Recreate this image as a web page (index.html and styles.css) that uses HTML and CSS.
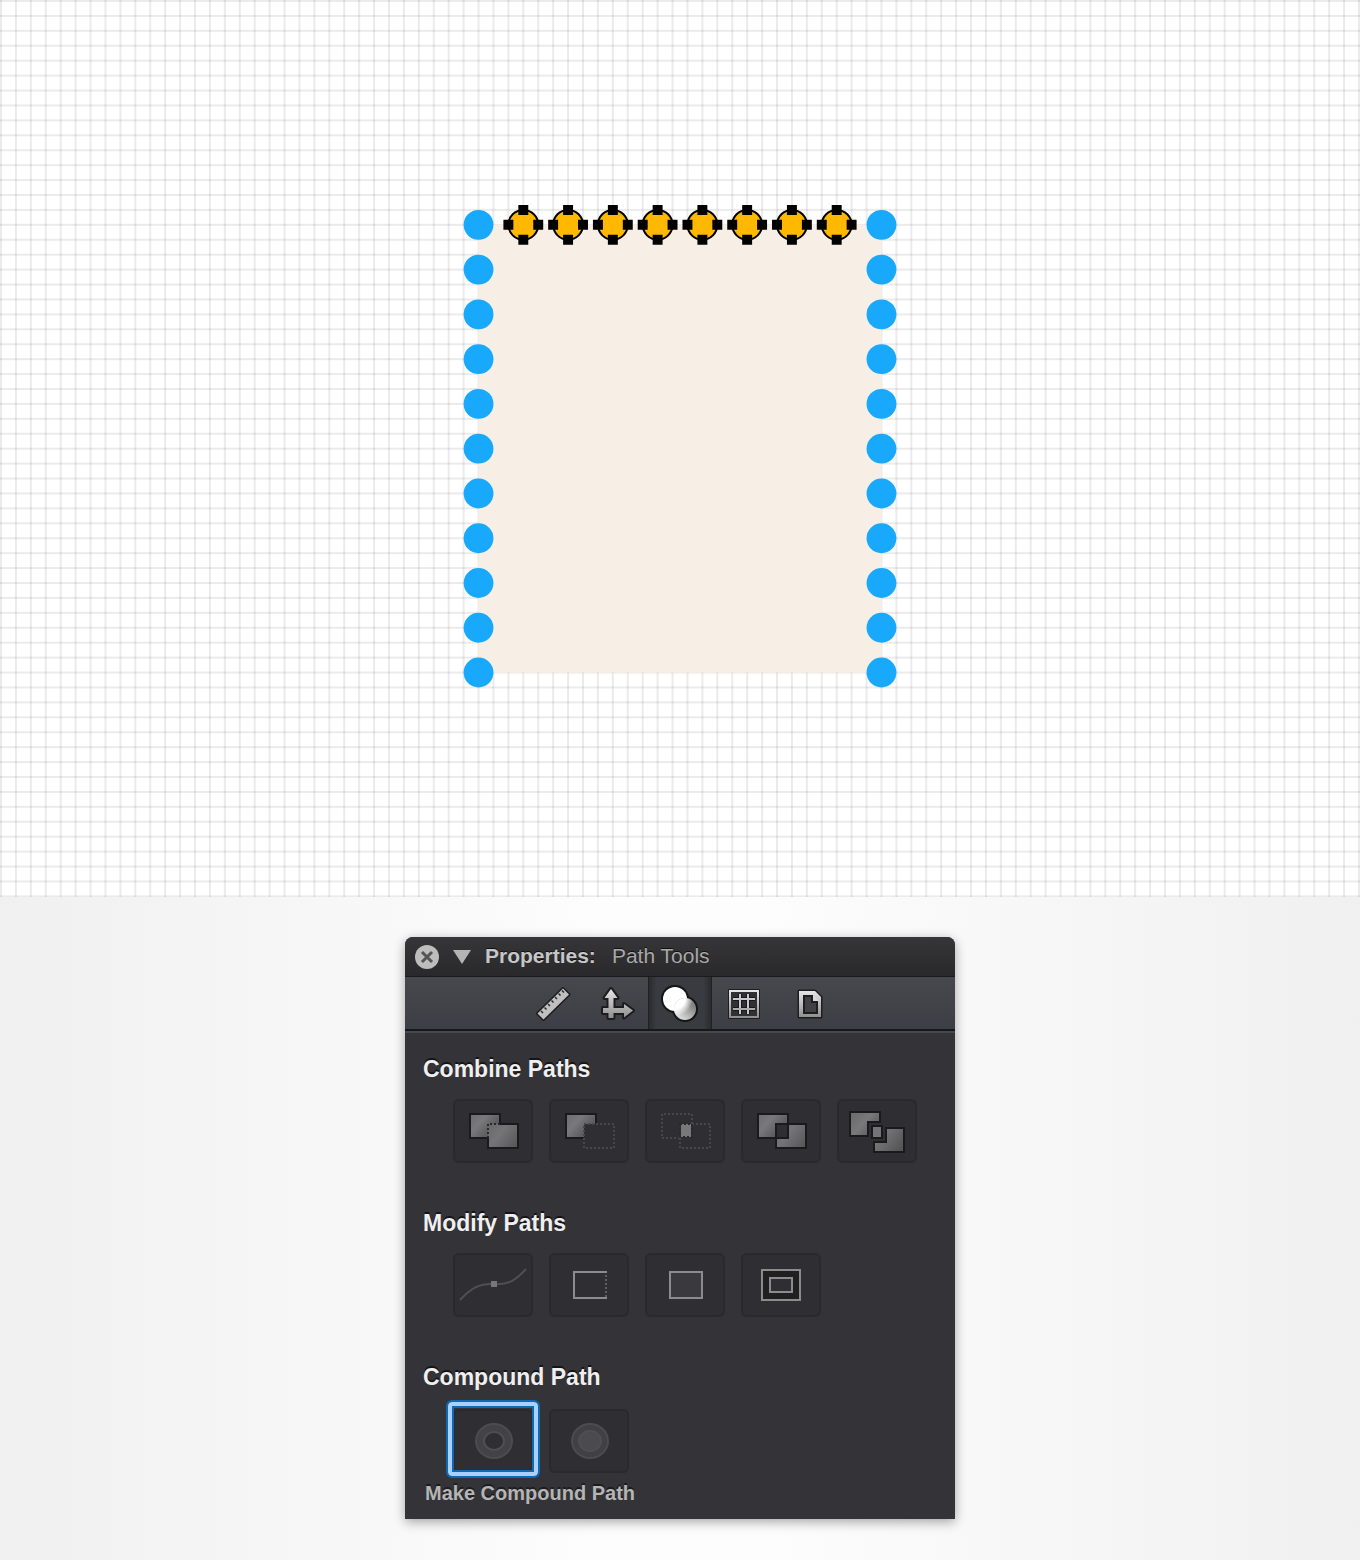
FILE: index.html
```html
<!DOCTYPE html>
<html lang="en">
<head>
<meta charset="utf-8">
<meta name="viewport" content="width=device-width, initial-scale=1">
<title>Path Tools</title>
<link rel="stylesheet" href="styles.css">
</head>
<body>
<main class="page">
  <svg class="artboard" viewBox="-1 -1 1367 902" role="img" aria-label="Drawing canvas">
    <defs>
      <pattern id="cell" width="15" height="15" x="-1" y="-1" patternUnits="userSpaceOnUse">
        <path class="grid-line" d="M1 0V15"/><path class="grid-line" d="M0 1H15"/>
      </pattern>
      <circle id="dot" class="dot" r="15"/>
      <g id="node">
        <circle class="node-fill" r="15"/>
        <path class="node-handle" d="M-5-20H5V-10H-5ZM-5 10H5V20H-5ZM-20-5H-10V5H-20ZM10-5H20V5H10Z"/>
      </g>
      <g id="dots">
        <use href="#dot" y="225"/><use href="#dot" y="270"/><use href="#dot" y="315"/><use href="#dot" y="360"/>
        <use href="#dot" y="405"/><use href="#dot" y="450"/><use href="#dot" y="495"/><use href="#dot" y="540"/>
        <use href="#dot" y="585"/><use href="#dot" y="630"/><use href="#dot" y="675"/>
      </g>
    </defs>
    <rect x="-1" y="-1" width="1367" height="902" fill="#fff"/>
    <rect x="-1" y="-1" width="1367" height="902" fill="url(#cell)"/>
    <rect class="sheet" x="480" y="225" width="405" height="450"/>
    <use href="#dots" x="480"/><use href="#dots" x="885"/>
    <use href="#node" x="525" y="225"/><use href="#node" x="570" y="225"/><use href="#node" x="615" y="225"/><use href="#node" x="660" y="225"/>
    <use href="#node" x="705" y="225"/><use href="#node" x="750" y="225"/><use href="#node" x="795" y="225"/><use href="#node" x="840" y="225"/>
  </svg>

  <div class="desk">
    <section class="panel" aria-labelledby="panel-title">
      <header class="titlebar">
        <button class="close" type="button" aria-label="Close">
          <svg width="24" height="24" viewBox="0 0 24 24"><circle cx="12" cy="12" r="12" fill="#bdbdbd"/><path d="M7 7l10 10M17 7l-10 10" stroke="#555557" stroke-width="3"/></svg>
        </button>
        <button class="collapse" type="button" aria-label="Collapse">
          <svg width="18" height="14" viewBox="0 0 18 14"><path d="M0 0H18L9 14Z" fill="#b4b4b5"/></svg>
        </button>
        <h1 class="title" id="panel-title">Properties: <span class="subtitle">Path Tools</span></h1>
      </header>

      <nav class="tabs" aria-label="Inspectors">
        <button class="tab" type="button" aria-label="Geometry">
          <svg width="64" height="52" viewBox="0 0 64 52">
            <defs><linearGradient id="metal" x1="0" y1="0" x2="0" y2="1"><stop offset="0" stop-color="#e6e6e6"/><stop offset="1" stop-color="#8f8f90"/></linearGradient></defs>
            <path d="M17.500 36.500L43 11.500L49 17.500L23.500 42.500Z" fill="#c0c0c1" stroke="#1c1c1f" stroke-width="3" stroke-linejoin="round" paint-order="stroke"/>
            <path d="M21 34l2 2M24.500 30.500l2 2M28 27l2 2M31.500 23.500l2 2M35 20l2 2M38.500 16.500l2 2M42 13.500l2 2" stroke="#2a2a2d" stroke-width="1.500"/>
          </svg>
        </button>
        <button class="tab" type="button" aria-label="Transform">
          <svg width="64" height="52" viewBox="0 0 64 52">
            <path d="M27 12L33.500 21H29.500V31H40V27L49 33.500L40 40.500V36H29.500V41H24.500V36H19V31H24.500V21H20.500Z" fill="url(#metal)" stroke="#1c1c1f" stroke-width="4" stroke-linejoin="round" paint-order="stroke"/>
          </svg>
        </button>
        <button class="tab tab-active" type="button" aria-label="Path Tools" aria-current="page">
          <svg width="64" height="52" viewBox="0 0 64 52">
            <defs>
              <linearGradient id="pearl" gradientUnits="userSpaceOnUse" x1="30" y1="38" x2="41" y2="24"><stop offset="0" stop-color="#d6d6d6"/><stop offset=".9" stop-color="#858585"/></linearGradient>
              <radialGradient id="glow" gradientUnits="userSpaceOnUse" cx="26" cy="21" r="19"><stop offset=".6" stop-color="#fff"/><stop offset="1" stop-color="#fff" stop-opacity="0"/></radialGradient>
            </defs>
            <g fill="#151517"><circle cx="27" cy="22" r="14"/><circle cx="37" cy="32" r="13"/></g>
            <circle cx="27" cy="22" r="12" fill="#fff"/><circle cx="37" cy="32" r="11" fill="url(#pearl)"/>
            <circle cx="37" cy="32" r="11" fill="url(#glow)"/>
          </svg>
        </button>
        <button class="tab" type="button" aria-label="Grid">
          <svg width="64" height="52" viewBox="0 0 64 52">
            <rect x="16" y="12" width="32" height="30" rx="1" fill="#1e1e21"/>
            <rect x="18" y="14" width="28" height="26" fill="#303035" stroke="url(#metal)" stroke-width="2"/>
            <path d="M28 17V37M36 17V37M21 22H43M21 32H43" stroke="#18181b" stroke-width="4"/>
            <path d="M28 17V37M36 17V37M21 22H43" stroke="#cacacb" stroke-width="2"/>
            <path d="M21 32H43" stroke="#ababad" stroke-width="2"/>
          </svg>
        </button>
        <button class="tab" type="button" aria-label="Document">
          <svg width="64" height="52" viewBox="0 0 64 52">
            <path d="M23 14H39L45 20V40H23Z" fill="url(#metal)" stroke="#1e1e21" stroke-width="3" stroke-linejoin="round" paint-order="stroke"/>
            <path d="M28 19H36V25H41V36H28Z" fill="#404045" stroke="#1e1e21" stroke-width="2"/>
            <path d="M37 18V24H43Z" fill="#d8d8d8"/>
          </svg>
        </button>
      </nav>

      <div class="tools">
        <section class="group">
          <h2 class="heading">Combine Paths</h2>
          <div class="row">
            <button class="tool" type="button" aria-label="Unite">
              <svg width="80" height="64" viewBox="0 0 80 64">
                <defs>
                  <linearGradient id="steel" gradientUnits="userSpaceOnUse" x1="17" y1="14" x2="47" y2="40"><stop offset="0" stop-color="#6c6c6e"/><stop offset=".35" stop-color="#79797b"/><stop offset=".65" stop-color="#5f5f62"/><stop offset="1" stop-color="#5c5c5f"/></linearGradient>
                  <linearGradient id="steel-low" gradientUnits="userSpaceOnUse" x1="35" y1="25" x2="65" y2="49"><stop offset="0" stop-color="#68686a"/><stop offset=".4" stop-color="#757578"/><stop offset="1" stop-color="#545457"/></linearGradient>
                </defs>
                <rect class="shape" x="17" y="15" width="30" height="24" fill="url(#steel)"/>
                <rect x="35" y="25" width="30" height="24" fill="url(#steel-low)"/>
                <path class="shape" fill="none" d="M47 25H65V49H35V39"/>
                <path d="M35 39V25H47" class="dotted-dark"/>
              </svg>
            </button>
            <button class="tool" type="button" aria-label="Subtract">
              <svg width="80" height="64" viewBox="0 0 80 64">
                <path d="M17 15H47V25H35V39H17Z" fill="url(#steel)"/>
                <path class="shape" fill="none" d="M47 25V15H17V39H35"/>
                <rect class="dotted" x="35" y="25" width="30" height="24"/>
              </svg>
            </button>
            <button class="tool" type="button" aria-label="Intersect">
              <svg width="80" height="64" viewBox="0 0 80 64">
                <path class="dotted" d="M35 39H17V15H47V25M47 25H65V49H35V39"/>
                <rect x="36" y="25" width="10" height="13" fill="#78787a"/>
                <rect class="dotted-dark" x="35" y="25" width="12" height="13"/>
              </svg>
            </button>
            <button class="tool" type="button" aria-label="Exclude">
              <svg width="80" height="64" viewBox="0 0 80 64">
                <path class="shape" d="M17 15H47V25H35V39H17Z" fill="url(#steel)"/>
                <path class="shape" d="M47 25H65V49H35V39H47Z" fill="url(#steel-low)"/>
              </svg>
            </button>
            <button class="tool" type="button" aria-label="Split">
              <svg width="80" height="64" viewBox="0 0 80 64">
                <path class="shape" d="M13 13H43V23H31V37H13Z" fill="url(#steel)"/>
                <rect class="shape" x="35" y="27" width="10" height="12" fill="#747476"/>
                <path class="shape" d="M49 29H67V53H37V43H49Z" fill="url(#steel-low)"/>
              </svg>
            </button>
          </div>
        </section>

        <section class="group">
          <h2 class="heading">Modify Paths</h2>
          <div class="row">
            <button class="tool" type="button" aria-label="Insert Point">
              <svg width="80" height="64" viewBox="0 0 80 64"><path d="M7 47C18 35 27 30 41 31S62 28 73 16" fill="none" stroke="#505054" stroke-width="2"/><rect x="38" y="28" width="6" height="6" fill="#77777a"/></svg>
            </button>
            <button class="tool" type="button" aria-label="Open Path">
              <svg width="80" height="64" viewBox="0 0 80 64"><path d="M58 19H25V45H58" class="outline"/><path d="M57 22V44" stroke="#606064" stroke-width="2" stroke-dasharray="2 2"/></svg>
            </button>
            <button class="tool" type="button" aria-label="Close Path">
              <svg width="80" height="64" viewBox="0 0 80 64"><rect x="25" y="19" width="32" height="26" fill="#3a393e" stroke="#8c8c8e" stroke-width="2"/></svg>
            </button>
            <button class="tool" type="button" aria-label="Stroke to Path">
              <svg width="80" height="64" viewBox="0 0 80 64"><rect x="21" y="17" width="38" height="30" fill="#202021" stroke="#8c8c8e" stroke-width="2"/><rect x="29" y="25" width="22" height="14" fill="#2f2e33" stroke="#8c8c8e" stroke-width="2"/></svg>
            </button>
          </div>
        </section>

        <section class="group group-compound">
          <h2 class="heading">Compound Path</h2>
          <div class="row">
            <button class="tool tool-focus" type="button" aria-label="Make Compound Path" aria-describedby="hint">
              <svg width="80" height="64" viewBox="0 0 80 64"><ellipse cx="41" cy="32" rx="18" ry="17" fill="#434246" stroke="#4c4b4f" stroke-width="2"/><ellipse cx="41" cy="32" rx="10" ry="9" fill="#2f2e33" stroke="#4f4e52" stroke-width="2"/></svg>
            </button>
            <button class="tool" type="button" aria-label="Release Compound Path">
              <svg width="80" height="64" viewBox="0 0 80 64"><ellipse cx="41" cy="32" rx="18" ry="17" fill="#414044" stroke="#4c4b4f" stroke-width="2"/><ellipse cx="41" cy="32" rx="11" ry="10" fill="#4b4a4e" stroke="#4f4e52" stroke-width="2"/></svg>
            </button>
          </div>
          <p class="hint" id="hint">Make Compound Path</p>
        </section>
      </div>
    </section>
  </div>
</main>
</body>
</html>
```
FILE: styles.css
```css
* { box-sizing: border-box; }

body {
  margin: 0;
  font-family: "Liberation Sans", Arial, sans-serif;
}

.page {
  display: flex;
  flex-direction: column;
  min-height: 100vh;
}

svg { display: block; }

button {
  padding: 0;
  border: 0;
  background: none;
  font: inherit;
}

/* Canvas */
.artboard { width: 100%; height: auto; flex: none; }
.grid-line { stroke: #000; stroke-opacity: .08; stroke-width: 2; }
.sheet { fill: #f7efe5; }
.dot { fill: #19a9fc; }
.node-fill { fill: #ffb800; stroke: #000; stroke-width: 2; }
.node-handle { fill: #000; }

/* Area under the canvas */
.desk {
  flex: 1;
  display: flex;
  justify-content: center;
  align-items: flex-start;
  padding: 40px 16px;
  background: linear-gradient(90deg, #f0f0f0, #fdfdfd 45%, #fdfdfd 55%, #f0f0f0);
}

.panel {
  width: 100%;
  max-width: 550px;
  border-radius: 8px 8px 0 0;
  background: #343337;
  box-shadow: 0 3px 12px rgba(0, 0, 0, .35);
}

.titlebar {
  display: flex;
  align-items: center;
  height: 40px;
  padding: 0 10px;
  border-bottom: 1px solid #1b1b1d;
  border-radius: 8px 8px 0 0;
  background: linear-gradient(#363639, #29292b);
}

.collapse { margin: 0 14px; }

.title {
  display: flex;
  gap: 16px;
  margin: 0;
  padding-bottom: 2px;
  color: #c6c6c7;
  font-size: 21px;
  line-height: 24px;
  text-shadow: 0 -1px 0 #111;
}

.subtitle { color: #a9a9aa; font-weight: 400; }

.tabs {
  display: flex;
  justify-content: center;
  height: 56px;
  border-bottom: 2px solid #47474c;
  background: linear-gradient(#47484d, #3c3e45);
  box-shadow: inset 0 -2px 0 #18181b;
}

.tab { width: 64px; height: 52px; }

.tab-active {
  border: solid #202124;
  border-width: 0 1px;
  background: linear-gradient(90deg, #2a2b2f, #3a3b40 12%, #3a3b40 88%, #2a2b2f);
}

.tab-active svg { margin: 0 -1px; }

.tools {
  display: flex;
  flex-direction: column;
  gap: 46px;
  padding: 22px 18px 14px;
}

.group { display: flex; flex-direction: column; gap: 16px; }
.group-compound { gap: 18px; }

.heading {
  margin: 0;
  color: #efefef;
  font-size: 23px;
  line-height: 28px;
  text-shadow: 0 -2px 0 #141416;
}

.row { display: flex; flex-wrap: wrap; gap: 16px; padding-left: 30px; }

.tool {
  position: relative;
  display: grid;
  place-items: center;
  width: 80px;
  height: 64px;
  border-radius: 6px;
  background: #2f2e33;
  box-shadow: inset 0 0 0 2px #2a292d;
}

.tool-focus { outline: 0; }

.tool-focus::after {
  content: "";
  position: absolute;
  inset: -9px -7px -5px;
  border: 2px solid #0f68b3;
  border-radius: 6px;
  box-shadow: inset 0 0 0 4px #a9d0fa, inset 0 0 0 6px #0f68b3;
}

.shape { stroke: #1a1a1c; stroke-width: 2; }
.outline { fill: none; stroke: #8c8c8e; stroke-width: 2; }
.dotted { fill: none; stroke: #48474b; stroke-width: 2; stroke-dasharray: 2 2; }
.dotted-dark { fill: none; stroke: #29292b; stroke-width: 2; stroke-dasharray: 2 2; }

.hint {
  margin: -10px 2px 0;
  color: #b5b5b6;
  font-size: 20px;
  font-weight: 700;
  line-height: 24px;
  text-shadow: 0 -2px 0 #1c1c1e;
}
```
